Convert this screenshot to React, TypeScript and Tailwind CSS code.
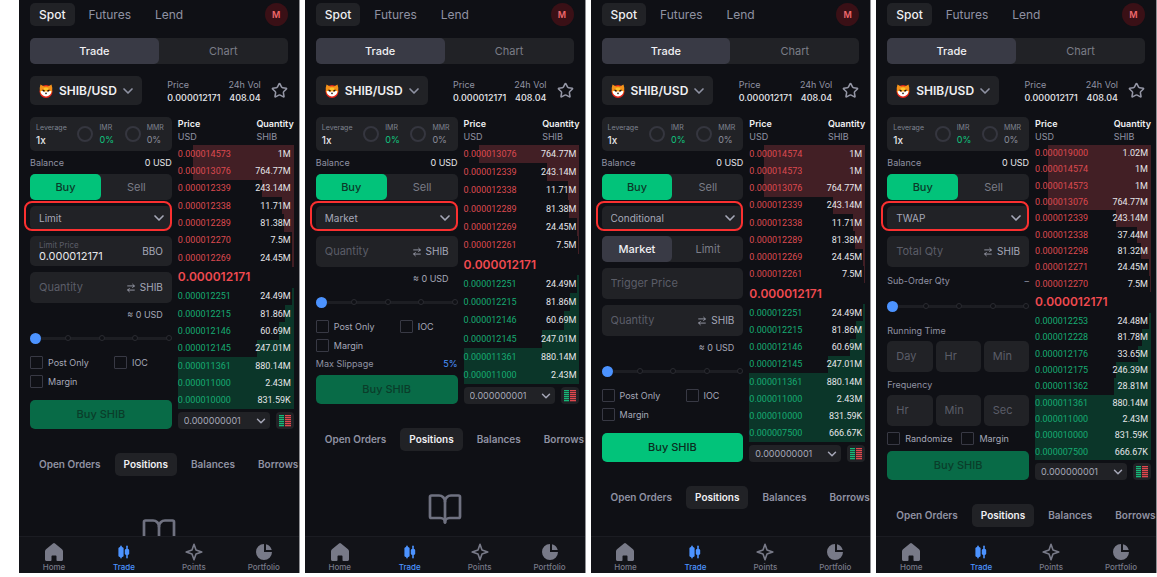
import { useState } from 'react';
import type { ReactNode } from 'react';
import { ArrowRightLeft, BookOpen, ChevronDown, Star } from 'lucide-react';
import { HiChartPie } from 'react-icons/hi';

type OrderType = 'Limit' | 'Market' | 'Conditional' | 'TWAP';

// price, quantity, depth bar in percent
type Level = [string, string, number];

interface Screen {
  type: OrderType;
  asks: Level[];
  bids: Level[];
}

const ORDER_TYPES: OrderType[] = ['Limit', 'Market', 'Conditional', 'TWAP'];

const SCREENS: Screen[] = [
  {
    type: 'Limit',
    asks: [
      ['0.000014573', '1M', 87],
      ['0.000013076', '764.77M', 87],
      ['0.000012339', '243.14M', 28],
      ['0.000012338', '11.71M', 10],
      ['0.000012289', '81.38M', 9],
      ['0.000012270', '7.5M', 2],
      ['0.000012269', '24.45M', 2],
    ],
    bids: [
      ['0.000012251', '24.49M', 2],
      ['0.000012215', '81.86M', 8],
      ['0.000012146', '60.69M', 13],
      ['0.000012145', '247.01M', 32],
      ['0.000011361', '880.14M', 100],
      ['0.000011000', '2.43M', 100],
      ['0.000010000', '831.59K', 100],
    ],
  },
  {
    type: 'Market',
    asks: [
      ['0.000013076', '764.77M', 87],
      ['0.000012339', '243.14M', 28],
      ['0.000012338', '11.71M', 10],
      ['0.000012289', '81.38M', 9],
      ['0.000012269', '24.45M', 2],
      ['0.000012261', '7.5M', 1],
    ],
    bids: [
      ['0.000012251', '24.49M', 2],
      ['0.000012215', '81.86M', 8],
      ['0.000012146', '60.69M', 13],
      ['0.000012145', '247.01M', 32],
      ['0.000011361', '880.14M', 100],
      ['0.000011000', '2.43M', 100],
    ],
  },
  {
    type: 'Conditional',
    asks: [
      ['0.000014574', '1M', 87],
      ['0.000014573', '1M', 87],
      ['0.000013076', '764.77M', 87],
      ['0.000012339', '243.14M', 28],
      ['0.000012338', '11.71M', 10],
      ['0.000012289', '81.38M', 9],
      ['0.000012269', '24.45M', 2],
      ['0.000012261', '7.5M', 1],
    ],
    bids: [
      ['0.000012251', '24.49M', 2],
      ['0.000012215', '81.86M', 8],
      ['0.000012146', '60.69M', 13],
      ['0.000012145', '247.01M', 32],
      ['0.000011361', '880.14M', 100],
      ['0.000011000', '2.43M', 100],
      ['0.000010000', '831.59K', 100],
      ['0.000007500', '666.67K', 100],
    ],
  },
  {
    type: 'TWAP',
    asks: [
      ['0.000019000', '1.02M', 89],
      ['0.000014574', '1M', 89],
      ['0.000014573', '1M', 89],
      ['0.000013076', '764.77M', 89],
      ['0.000012339', '243.14M', 30],
      ['0.000012338', '37.44M', 12],
      ['0.000012298', '81.32M', 9],
      ['0.000012271', '24.45M', 2],
      ['0.000012270', '7.5M', 1],
    ],
    bids: [
      ['0.000012253', '24.48M', 2],
      ['0.000012228', '81.78M', 8],
      ['0.000012176', '33.65M', 11],
      ['0.000012175', '246.39M', 30],
      ['0.000011362', '28.81M', 32],
      ['0.000011361', '880.14M', 100],
      ['0.000011000', '2.43M', 100],
      ['0.000010000', '831.59K', 100],
      ['0.000007500', '666.67K', 100],
    ],
  },
];

/* ---------- icons ---------- */

function ShibaIcon() {
  return (
    <svg viewBox="0 0 28 28" className="size-3.5" aria-hidden="true">
      <circle cx="14" cy="15" r="13" fill="#e8261c" />
      <path d="M3 1 L10 5 Q14 4 18 5 L25 1 Q28 9 26 16 Q22 23 14 24 Q6 23 2 16 Q0 9 3 1Z" fill="#f7931a" />
      <path d="M9 8 Q14 6 19 8 L17 13 H11Z" fill="#fbc52c" />
      <path d="M3 15 Q8 12 11 16 L14 14 L17 16 Q20 12 25 15 Q23 24 14 25 Q5 24 3 15Z" fill="#fff" />
      <path d="M7 11 L12 13 L10 15.500 L7 14Z M21 11 L16 13 L18 15.500 L21 14Z" fill="#1c1208" />
      <path d="M11.500 17.500 H16.500 L14 21Z" fill="#1c1208" />
    </svg>
  );
}

function HomeIcon() {
  return (
    <svg viewBox="0 0 18 18" className="h-[18px] w-[18px]" fill="currentColor" aria-hidden="true">
      <path d="M8 .4a1.600 1.600 0 0 1 2 0l7 5.800c.6.5 1 1.200 1 2V16.500c0 .8-.7 1.500-1.500 1.500H12.500c-.6 0-1-.4-1-1v-3.500c0-.6-.4-1-1-1h-3c-.6 0-1 .4-1 1V17c0 .6-.4 1-1 1H1.500C.7 18 0 17.300 0 16.500V8.200c0-.8.4-1.500 1-2z" />
    </svg>
  );
}

function CandlesIcon() {
  return (
    <svg viewBox="0 0 12 14" className="h-3.5 w-3" fill="currentColor" aria-hidden="true">
      <rect x="2.200" y=".5" width="1.600" height="13" rx=".8" />
      <rect x=".4" y="2" width="5.200" height="10" rx="1.600" />
      <rect x="8.200" y=".5" width="1.600" height="13" rx=".8" />
      <rect x="6.800" y="4" width="4.400" height="6" rx="1.400" />
    </svg>
  );
}

function SparkIcon() {
  return (
    <svg viewBox="0 0 18 18" className="h-[18px] w-[18px]" fill="none" stroke="currentColor" strokeWidth="1.600" strokeLinejoin="round" aria-hidden="true">
      <path d="M9 1.200 L11 7 L16.800 9 L11 11 L9 16.800 L7 11 L1.200 9 L7 7Z" />
    </svg>
  );
}

function BookModeIcon() {
  return (
    <svg viewBox="0 0 12 12" className="size-3" aria-hidden="true">
      {[0, 2, 4, 6, 8, 10].map((y) => (
        <g key={y}>
          <rect x="0" y={y} width="5" height="1.300" fill="#16b878" />
          <rect x="6" y={y} width="6" height="1.300" fill="#e0484e" />
        </g>
      ))}
    </svg>
  );
}

/* ---------- form parts ---------- */

function Segmented({
  options,
  active,
  activeClass,
}: {
  options: [string, string];
  active: string;
  activeClass: string;
}) {
  const [value, setValue] = useState(active);

  return (
    <div className="grid h-[26px] shrink-0 grid-cols-2 rounded-[5px] bg-[#212226]">
      {options.map((o) => (
        <button
          key={o}
          type="button"
          onClick={() => setValue(o)}
          className={`rounded-[5px] text-[11px] ${
            value === o ? activeClass : 'text-[#7b7d87]'
          }`}
        >
          {o}
        </button>
      ))}
    </div>
  );
}

function TypeSelect({ type }: { type: OrderType }) {
  return (
    <div className="relative">
      <select
        aria-label="Order type"
        defaultValue={type}
        className="block h-6 w-full appearance-none rounded-[5px] bg-[#212226] px-[9px] text-[10px] text-[#a6a8b8] outline-none"
      >
        {ORDER_TYPES.map((t) => (
          <option key={t}>{t}</option>
        ))}
      </select>
      <ChevronDown className="pointer-events-none absolute top-1 right-[5px] size-4 text-[#a6a8b8]" strokeWidth={2.5} />
      {/* highlight ring */}
      <div className="pointer-events-none absolute -top-[5px] right-0 -bottom-px -left-1.5 rounded-[8px] border-2 border-[#fb3030]" />
    </div>
  );
}

function Field({ placeholder, children }: { placeholder: string; children?: ReactNode }) {
  return (
    <div className="flex h-[31px] min-w-0 items-center rounded-[5px] bg-[#212226] px-[9px]">
      <input
        aria-label={placeholder}
        placeholder={placeholder}
        className="w-full min-w-0 flex-1 bg-transparent text-[11px] text-white outline-none placeholder:text-[#5b5d68]"
      />
      {children}
    </div>
  );
}

function QuantityField({ placeholder }: { placeholder: string }) {
  return (
    <Field placeholder={placeholder}>
      <button type="button" className="flex items-center gap-1 text-[10px] text-[#a6a8b8]">
        <ArrowRightLeft className="size-2.5" strokeWidth={2} />
        SHIB
      </button>
    </Field>
  );
}

function LimitPrice({ id }: { id: string }) {
  return (
    <div className="flex h-[30px] items-center rounded-[5px] bg-[#212226] px-[9px]">
      <div className="flex min-w-0 flex-1 flex-col">
        <label htmlFor={id} className="text-[8px] leading-[10px] text-[#5b5d68]">
          Limit Price
        </label>
        <input
          id={id}
          defaultValue="0.000012171"
          className="w-full bg-transparent text-[11px] leading-[13px] text-[#e6e6ea] outline-none"
        />
      </div>
      <button type="button" className="text-[10px] text-[#a6a8b8]">
        BBO
      </button>
    </div>
  );
}

function Slider() {
  return (
    <div className="relative flex h-3 items-center">
      <div className="absolute inset-x-0 h-[3px] rounded-full bg-[#1d1e23]" />
      <div className="absolute right-0 left-0.5 flex justify-between">
        {[0, 25, 50, 75, 100].map((p) => (
          <span key={p} className="size-1.5 rounded-full border border-[#2a2b31] bg-[#0f1015]" />
        ))}
      </div>
      <input
        type="range"
        aria-label="Order size"
        defaultValue={0}
        className="relative h-3 w-full appearance-none bg-transparent [&::-webkit-slider-thumb]:size-[11px] [&::-webkit-slider-thumb]:appearance-none [&::-webkit-slider-thumb]:rounded-full [&::-webkit-slider-thumb]:bg-[#4c93ff]"
      />
    </div>
  );
}

function Check({ label }: { label: string }) {
  return (
    <label className="flex h-[13px] items-center gap-[5px] text-[9px] text-[#a6a8b8]">
      <input type="checkbox" className="size-[13px] shrink-0 appearance-none rounded-[1px] border border-[#383944]" />
      {label}
    </label>
  );
}

function Leverage() {
  return (
    <div className="flex h-[34px] items-center justify-between rounded-[5px] bg-[#212226] pr-2 pl-1.5">
      <div>
        <p className="text-[7px] leading-3 text-[#7f8290]">Leverage</p>
        <p className="text-[10px] leading-3 font-medium text-[#e6e6ea]">1x</p>
      </div>
      <div className="flex items-center gap-1.5">
        <span className="size-4 rounded-full border-2 border-[#35363f]" />
        <div>
          <p className="text-[7px] leading-3 text-[#7f8290]">IMR</p>
          <p className="text-[9px] leading-3 text-[#10c47f]">0%</p>
        </div>
      </div>
      <div className="flex items-center gap-1.5">
        <span className="size-4 rounded-full border-2 border-[#35363f]" />
        <div>
          <p className="text-[7px] leading-3 text-[#7f8290]">MMR</p>
          <p className="text-[9px] leading-3 text-[#8b8d9b]">0%</p>
        </div>
      </div>
    </div>
  );
}

function TimeFields({ title, units }: { title: string; units: string[] }) {
  return (
    <fieldset>
      <legend className="mb-[5px] text-[9px] leading-[11px] text-[#8f92a3]">{title}</legend>
      <div className="grid grid-cols-3 gap-[3px]">
        {units.map((u) => (
          <Field key={u} placeholder={u} />
        ))}
      </div>
    </fieldset>
  );
}

function OrderForm({ type }: { type: OrderType }) {
  const enabled = type === 'Conditional';

  return (
    <form className="flex min-w-0 flex-col gap-1.5" onSubmit={(e) => e.preventDefault()}>
      <Leverage />
      <div className="flex justify-between text-[9px] leading-[11px]">
        <span className="text-[#8f92a3]">Balance</span>
        <span className="text-[#e6e6ea]">0 USD</span>
      </div>
      <Segmented options={['Buy', 'Sell']} active="Buy" activeClass="bg-[#02c37a] text-[#0b3a29] font-medium" />
      <TypeSelect type={type} />

      {type === 'Conditional' && (
        <>
          <Segmented options={['Market', 'Limit']} active="Market" activeClass="bg-[#393a45] text-[#f0f0f3] font-medium" />
          <Field placeholder="Trigger Price" />
        </>
      )}
      {type === 'Limit' && <LimitPrice id="limit-price" />}
      <QuantityField placeholder={type === 'TWAP' ? 'Total Qty' : 'Quantity'} />

      {type === 'TWAP' ? (
        <div className="mt-0.5 mb-2 flex justify-between text-[9px] leading-[11px] text-[#8f92a3]">
          <span>Sub-Order Qty</span>
          <span>–</span>
        </div>
      ) : (
        <p className="mb-[5px] pr-[9px] text-right text-[9px] leading-3 text-[#a6a8b8]">≈ 0 USD</p>
      )}
      <Slider />

      {type === 'TWAP' ? (
        <>
          <div className="mt-[7px] flex flex-col gap-[7px]">
            <TimeFields title="Running Time" units={['Day', 'Hr', 'Min']} />
            <TimeFields title="Frequency" units={['Hr', 'Min', 'Sec']} />
          </div>
          <div className="flex gap-[9px]">
            <Check label="Randomize" />
            <Check label="Margin" />
          </div>
        </>
      ) : (
        <div className="mt-1.5 grid grid-cols-[84px_1fr] gap-y-1.5">
          <Check label="Post Only" />
          <Check label="IOC" />
          <Check label="Margin" />
        </div>
      )}
      {type === 'Market' && (
        <div className="flex justify-between text-[9px] leading-[11px]">
          <span className="text-[#8f92a3]">Max Slippage</span>
          <span className="text-[#4c93ff]">5%</span>
        </div>
      )}

      <button
        type="submit"
        disabled={!enabled}
        className={`h-[29px] rounded-[5px] text-[11px] font-medium ${
          type === 'Limit' || type === 'Conditional' ? 'mt-1.5' : ''
        } ${enabled ? 'bg-[#02c37a] text-[#0a2d20]' : 'bg-[#086b47] text-[#0a3d2a]'}`}
      >
        Buy SHIB
      </button>
    </form>
  );
}

/* ---------- order book ---------- */

function LevelRow({ level, side }: { level: Level; side: 'ask' | 'bid' }) {
  const [price, qty, depth] = level;
  const color = side === 'ask' ? '#421f25' : '#0b3629';

  return (
    <tr
      className="flex flex-1 items-center justify-between"
      style={{ backgroundImage: `linear-gradient(to left, ${color} ${depth}%, transparent ${depth}%)` }}
    >
      <td className={side === 'ask' ? 'text-[#dd4a50]' : 'text-[#16ab72]'}>{price}</td>
      <td className="pr-[3px] text-[#e6e6ea]">{qty}</td>
    </tr>
  );
}

function OrderBook({ asks, bids }: { asks: Level[]; bids: Level[] }) {
  return (
    <div className="flex min-w-0 flex-col">
      <table className="flex flex-1 flex-col font-['Roboto',sans-serif] text-[9px] leading-3">
        <thead className="block h-7 font-['Inter',sans-serif]">
          <tr className="flex justify-between">
            <th className="text-left text-[9px] leading-[13px] font-semibold text-[#f0f0f3]">
              Price
              <span className="block font-normal text-[#8f92a3]">USD</span>
            </th>
            <th className="text-left text-[9px] leading-[13px] font-semibold text-[#f0f0f3]">
              Quantity
              <span className="block font-normal text-[#8f92a3]">SHIB</span>
            </th>
          </tr>
        </thead>
        <tbody className="contents">
          {asks.map((l) => (
            <LevelRow key={l[0]} level={l} side="ask" />
          ))}
          <tr className="flex h-[21px] items-center">
            <td colSpan={2} className="font-['Inter',sans-serif] text-[12px] font-semibold text-[#f04a50]">
              0.000012171
            </td>
          </tr>
          {bids.map((l) => (
            <LevelRow key={l[0]} level={l} side="bid" />
          ))}
        </tbody>
      </table>
      <div className="mt-[3px] flex gap-1.5">
        <div className="relative flex-1">
          <select
            aria-label="Price grouping"
            className="block h-[17px] w-full appearance-none rounded bg-[#212226] px-1.5 text-[9px] text-[#a6a8b8] outline-none"
          >
            <option>0.000000001</option>
          </select>
          <ChevronDown className="pointer-events-none absolute top-0.5 right-0.5 size-3.5 text-[#a6a8b8]" strokeWidth={2.5} />
        </div>
        <button type="button" aria-label="Book layout" className="flex h-[17px] w-[18px] items-center justify-center rounded bg-[#212226]">
          <BookModeIcon />
        </button>
      </div>
    </div>
  );
}

/* ---------- phone ---------- */

function BottomNav() {
  const items: [string, ReactNode][] = [
    ['Home', <HomeIcon />],
    ['Trade', <CandlesIcon />],
    ['Points', <SparkIcon />],
    ['Portfolio', <HiChartPie className="size-5" />],
  ];

  return (
    <nav className="grid h-[37px] shrink-0 grid-cols-4 border-t border-[#1b1c22] bg-[#121318]">
      {items.map(([label, icon]) => (
        <a
          key={label}
          href="#"
          className={`flex flex-col items-center pt-1 text-[8px] leading-[10px] font-medium ${
            label === 'Trade' ? 'text-[#4c93ff]' : 'text-[#787a88]'
          }`}
        >
          <span className="flex h-[21px] items-center">{icon}</span>
          {label}
        </a>
      ))}
    </nav>
  );
}

function Phone({ screen }: { screen: Screen }) {
  return (
    <section className="flex min-h-0 min-w-0 flex-col overflow-hidden border-r border-[#8f9094] bg-[#0f1015]">
      <div className="min-h-0 flex-1 overflow-hidden pt-[3px]">
        <header className="flex items-center justify-between px-[11px]">
          <div className="flex gap-1 text-[12px] leading-[23px] text-[#8f92a3]">
            <a href="#" className="rounded-[5px] bg-[#212226] px-[9px] font-medium text-[#f0f0f3]">Spot</a>
            <a href="#" className="px-2.5">Futures</a>
            <a href="#" className="px-2.5">Lend</a>
          </div>
          <button type="button" className="size-[23px] rounded-full bg-[#3a1016] text-[9px] font-semibold text-[#f0686c]">M</button>
        </header>

        <div className="mt-3 px-[11px]">
          <Segmented options={['Trade', 'Chart']} active="Trade" activeClass="bg-[#393a45] text-[#f0f0f3] font-medium" />
        </div>

        <div className="mt-3 flex items-center justify-between px-[11px]">
          <button type="button" className="flex h-[29px] items-center rounded-[5px] bg-[#212226] pr-1.5 pl-[9px] text-[12px] font-semibold text-[#f0f0f3]">
            <ShibaIcon />
            <span className="mr-[3px] ml-1.5">SHIB/USD</span>
            <ChevronDown className="size-4 text-[#8f92a3]" strokeWidth={2.5} />
          </button>
          <div className="flex items-center gap-2.5">
            <div className="flex gap-2 text-[9px] leading-[13px] text-[#8f92a3]">
              <p>
                Price
                <span className="block font-medium text-[#e6e6ea]">0.000012171</span>
              </p>
              <p className="text-right">
                24h Vol
                <span className="block font-medium text-[#e6e6ea]">408.04</span>
              </p>
            </div>
            <button type="button" aria-label="Favourite">
              <Star className="size-[17px] text-[#9496a5]" strokeWidth={2.2} />
            </button>
          </div>
        </div>

        <div className="mt-3 grid grid-cols-[142fr_116fr] gap-1.5 pr-[5px] pl-[11px]">
          <OrderForm type={screen.type} />
          <OrderBook asks={screen.asks} bids={screen.bids} />
        </div>

        <div className="mt-6 flex gap-[5px] pl-[11px] text-[10px] leading-[23px] font-semibold whitespace-nowrap text-[#8f92a3]">
          <button type="button" className="px-[9px]">Open Orders</button>
          <button type="button" className="rounded-[5px] bg-[#212226] px-[9px] text-[#f0f0f3]">Positions</button>
          <button type="button" className="px-[9px]">Balances</button>
          <button type="button" className="px-[9px]">Borrows</button>
        </div>

        <BookOpen className="mx-auto mt-10 size-9 text-[#6f7180]" strokeWidth={1.8} />
      </div>
      <BottomNav />
    </section>
  );
}

export default function App() {
  return (
    <main className="grid h-screen grid-cols-4 gap-[5px] bg-white pb-1 pl-[19px] font-['Inter',sans-serif]">
      {SCREENS.map((s) => (
        <Phone key={s.type} screen={s} />
      ))}
    </main>
  );
}
